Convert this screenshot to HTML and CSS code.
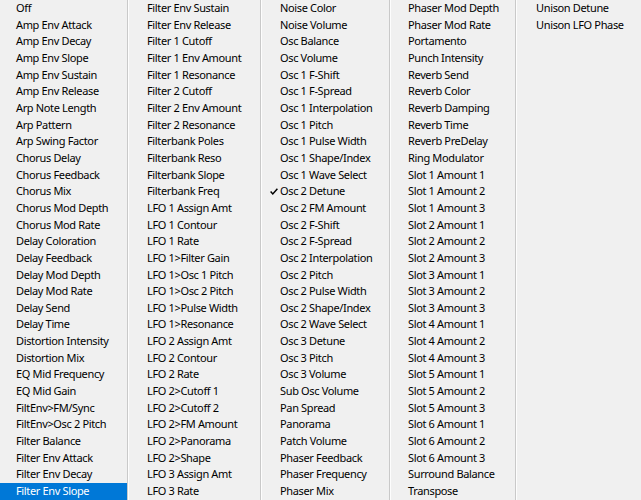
FILE: index.html
```html
<!DOCTYPE html>
<html lang="en">
<head>
    <meta charset="UTF-8">
    <title>Modulation Target</title>
    <link rel="stylesheet" href="styles.css">
</head>
<body>
    <div class="menu">
        <ul class="col col-1">
            <li>Off</li>
            <li>Amp Env Attack</li>
            <li>Amp Env Decay</li>
            <li>Amp Env Slope</li>
            <li>Amp Env Sustain</li>
            <li>Amp Env Release</li>
            <li>Arp Note Length</li>
            <li>Arp Pattern</li>
            <li>Arp Swing Factor</li>
            <li>Chorus Delay</li>
            <li>Chorus Feedback</li>
            <li>Chorus Mix</li>
            <li>Chorus Mod Depth</li>
            <li>Chorus Mod Rate</li>
            <li>Delay Coloration</li>
            <li>Delay Feedback</li>
            <li>Delay Mod Depth</li>
            <li>Delay Mod Rate</li>
            <li>Delay Send</li>
            <li>Delay Time</li>
            <li>Distortion Intensity</li>
            <li>Distortion Mix</li>
            <li>EQ Mid Frequency</li>
            <li>EQ Mid Gain</li>
            <li>FiltEnv&gt;FM/Sync</li>
            <li>FiltEnv&gt;Osc 2 Pitch</li>
            <li>Filter Balance</li>
            <li>Filter Env Attack</li>
            <li>Filter Env Decay</li>
            <li class="selected">Filter Env Slope</li>
        </ul>
        <ul class="col col-2">
            <li>Filter Env Sustain</li>
            <li>Filter Env Release</li>
            <li>Filter 1 Cutoff</li>
            <li>Filter 1 Env Amount</li>
            <li>Filter 1 Resonance</li>
            <li>Filter 2 Cutoff</li>
            <li>Filter 2 Env Amount</li>
            <li>Filter 2 Resonance</li>
            <li>Filterbank Poles</li>
            <li>Filterbank Reso</li>
            <li>Filterbank Slope</li>
            <li>Filterbank Freq</li>
            <li>LFO 1 Assign Amt</li>
            <li>LFO 1 Contour</li>
            <li>LFO 1 Rate</li>
            <li>LFO 1&gt;Filter Gain</li>
            <li>LFO 1&gt;Osc 1 Pitch</li>
            <li>LFO 1&gt;Osc 2 Pitch</li>
            <li>LFO 1&gt;Pulse Width</li>
            <li>LFO 1&gt;Resonance</li>
            <li>LFO 2 Assign Amt</li>
            <li>LFO 2 Contour</li>
            <li>LFO 2 Rate</li>
            <li>LFO 2&gt;Cutoff 1</li>
            <li>LFO 2&gt;Cutoff 2</li>
            <li>LFO 2&gt;FM Amount</li>
            <li>LFO 2&gt;Panorama</li>
            <li>LFO 2&gt;Shape</li>
            <li>LFO 3 Assign Amt</li>
            <li>LFO 3 Rate</li>
        </ul>
        <ul class="col col-3">
            <li>Noise Color</li>
            <li>Noise Volume</li>
            <li>Osc Balance</li>
            <li>Osc Volume</li>
            <li>Osc 1 F-Shift</li>
            <li>Osc 1 F-Spread</li>
            <li>Osc 1 Interpolation</li>
            <li>Osc 1 Pitch</li>
            <li>Osc 1 Pulse Width</li>
            <li>Osc 1 Shape/Index</li>
            <li>Osc 1 Wave Select</li>
            <li class="checked">
                <svg class="check" width="8" height="7" viewBox="0 0 8 7">
                    <path d="M0.6 3.6 L2.8 5.9 L7.4 0.8" fill="none" stroke="#000" stroke-width="1.5"/>
                </svg>Osc 2 Detune
            </li>
            <li>Osc 2 FM Amount</li>
            <li>Osc 2 F-Shift</li>
            <li>Osc 2 F-Spread</li>
            <li>Osc 2 Interpolation</li>
            <li>Osc 2 Pitch</li>
            <li>Osc 2 Pulse Width</li>
            <li>Osc 2 Shape/Index</li>
            <li>Osc 2 Wave Select</li>
            <li>Osc 3 Detune</li>
            <li>Osc 3 Pitch</li>
            <li>Osc 3 Volume</li>
            <li>Sub Osc Volume</li>
            <li>Pan Spread</li>
            <li>Panorama</li>
            <li>Patch Volume</li>
            <li>Phaser Feedback</li>
            <li>Phaser Frequency</li>
            <li>Phaser Mix</li>
        </ul>
        <ul class="col col-4">
            <li>Phaser Mod Depth</li>
            <li>Phaser Mod Rate</li>
            <li>Portamento</li>
            <li>Punch Intensity</li>
            <li>Reverb Send</li>
            <li>Reverb Color</li>
            <li>Reverb Damping</li>
            <li>Reverb Time</li>
            <li>Reverb PreDelay</li>
            <li>Ring Modulator</li>
            <li>Slot 1 Amount 1</li>
            <li>Slot 1 Amount 2</li>
            <li>Slot 1 Amount 3</li>
            <li>Slot 2 Amount 1</li>
            <li>Slot 2 Amount 2</li>
            <li>Slot 2 Amount 3</li>
            <li>Slot 3 Amount 1</li>
            <li>Slot 3 Amount 2</li>
            <li>Slot 3 Amount 3</li>
            <li>Slot 4 Amount 1</li>
            <li>Slot 4 Amount 2</li>
            <li>Slot 4 Amount 3</li>
            <li>Slot 5 Amount 1</li>
            <li>Slot 5 Amount 2</li>
            <li>Slot 5 Amount 3</li>
            <li>Slot 6 Amount 1</li>
            <li>Slot 6 Amount 2</li>
            <li>Slot 6 Amount 3</li>
            <li>Surround Balance</li>
            <li>Transpose</li>
        </ul>
        <ul class="col col-5">
            <li>Unison Detune</li>
            <li>Unison LFO Phase</li>
        </ul>
    </div>
</body>
</html>
```

FILE: styles.css
```css
* {
    margin: 0;
    padding: 0;
    box-sizing: border-box;
}
html, body {
    height: 100%;
    overflow: hidden;
}
body {
    font-family: "Noto Sans", "Open Sans", sans-serif;
    font-size: 11px;
    letter-spacing: -0.35px;
    color: #000;
    background: #f0f0f0;
}
.menu {
    display: flex;
    height: 500px;
    background: #f0f0f0;
}
.col {
    list-style: none;
    height: 100%;
}
.col + .col {
    border-left: 1px solid #c9c9c9;
    box-shadow: inset 1px 0 #fdfdfd;
}
.col-1 { width: 127px; }
.col-2 { width: 133px; }
.col-3 { width: 129px; }
.col-4 { width: 126px; }
.col-5 { flex: 1; }
.col li {
    height: 16.667px;
    line-height: 16.667px;
    padding-left: 19px;
    white-space: nowrap;
}
.col-1 li {
    padding-left: 16px;
}
.col-4 li {
    padding-left: 18px;
}
.col-5 li {
    padding-left: 20px;
}
.col li.selected {
    background: #0078d7;
    color: #fff;
}
.col li.checked {
    display: flex;
    align-items: center;
    padding-left: 0;
}
.check {
    margin-left: 9px;
    margin-right: 2px;
}
```
